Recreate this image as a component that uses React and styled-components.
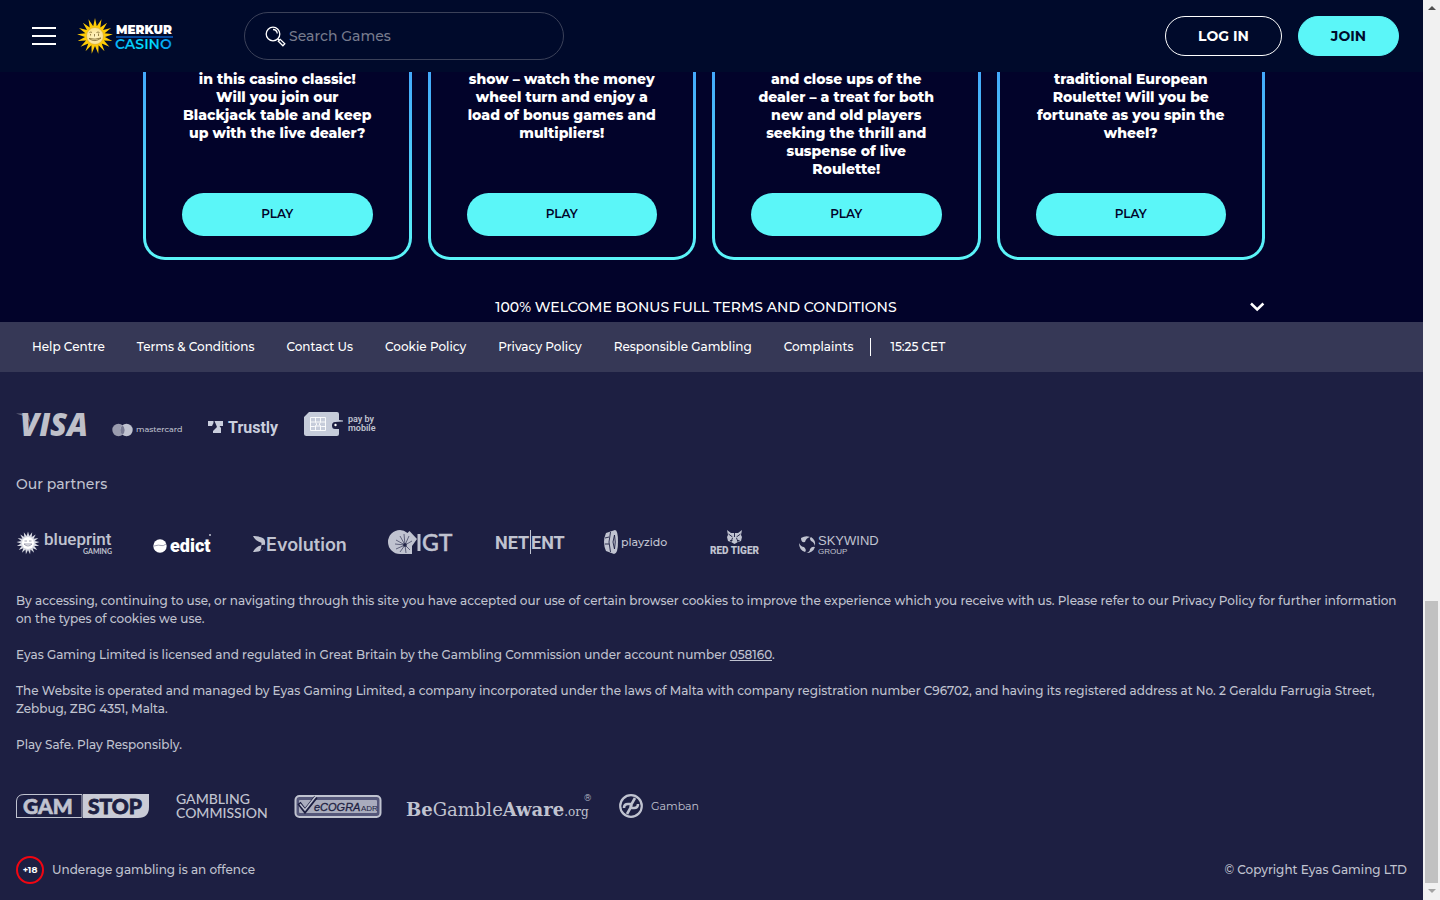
import React from 'react';
import styled, { createGlobalStyle } from 'styled-components';

const ink = '#c0c3d0';
const dark = '#1d1f42';

const Global = createGlobalStyle`
  *, *::before, *::after { box-sizing: border-box; }
  body { margin: 0; background: ${dark}; font-family: Montserrat, Inter, "Liberation Sans", sans-serif; color: #fff; }
  p { margin: 0; }
  button, input { font-family: inherit; }
  svg { display: block; overflow: visible; }
`;

const Shell = styled.div`display: grid; grid-template-columns: minmax(0, 1fr) 17px; min-height: 100vh;`;
const Page = styled.div`display: flex; flex-direction: column; background: ${dark};`;

const Header = styled.header`
  position: sticky; top: 0; z-index: 2; height: 72px; padding: 0 24px 0 32px;
  display: flex; align-items: center; background: #000a2b;
`;
const MenuButton = styled.button`
  width: 24px; height: 18px; padding: 0; border: 0; background: none; cursor: pointer;
  display: flex; flex-direction: column; justify-content: space-between;
  span { height: 2px; background: #fff; }
`;
const Brand = styled.a`margin-left: 21px; width: 98px;`;
const Search = styled.label`
  margin-left: 69px; width: 320px; height: 48px; padding: 0 20px; border: 1px solid #3b4159; border-radius: 24px;
  display: flex; align-items: center; gap: 3px;
  input { flex: 1; min-width: 0; padding: 0; border: 0; outline: 0; background: none; color: #fff; font-size: 14px; font-weight: 500; }
  input::placeholder { color: #777b8d; opacity: 1; }
`;
const Account = styled.div`margin-left: auto; display: flex; gap: 16px;`;
const Pill = styled.button`
  height: 40px; width: ${p => (p.$filled ? 101 : 117)}px; border-radius: 20px; cursor: pointer; padding: 0;
  border: 1px solid ${p => (p.$filled ? '#5bf6f8' : '#fff')};
  background: ${p => (p.$filled ? '#5bf6f8' : 'transparent')};
  color: ${p => (p.$filled ? '#000a2b' : '#fff')};
  font-size: 14px; font-weight: 700;
`;

const Main = styled.main`background: #02032a; padding-right: 15px; margin-top: -2px;`;
const Content = styled.div`max-width: 1122px; margin: 0 auto;`;
const Cards = styled.div`display: grid; grid-template-columns: repeat(4, minmax(0, 1fr)); gap: 16px;`;
const Card = styled.article`
  height: 190px; padding: 0 36px 21px; text-align: center;
  border: 3px solid transparent; border-top: 0; border-radius: 0 0 22px 22px;
  background: linear-gradient(#02032a, #02032a) padding-box, linear-gradient(#43a8fb, #5bf6f8) border-box;
  display: flex; flex-direction: column; justify-content: space-between;
  font-size: 14px; line-height: 18px; font-weight: 800;
  p { white-space: pre-line; margin: 0 -20px; }
`;
const Play = styled.button`
  height: 43px; border: 0; border-radius: 22px; background: #5bf6f8; color: #02032a;
  font-size: 12px; font-weight: 600; cursor: pointer; padding: 0 0 2px;
`;
const Terms = styled.button`
  width: 100%; height: 30px; margin-top: 32px; padding: 0; border: 0; background: none; color: #fff; cursor: pointer;
  display: flex; align-items: center; font-size: 14px; font-weight: 500;
  span { flex: 1; }
`;

const FooterNav = styled.nav`
  height: 50px; padding: 0 32px; background: #363856; display: flex; align-items: center; gap: 32px;
  font-size: 12px; line-height: 18px; font-weight: 500;
  a { color: #fff; text-decoration: none; }
`;
const Clock = styled.span`margin-left: -16px; padding-left: 20px; border-left: 1px solid #fff;`;
const Footer = styled.footer`flex: 1; padding: 40px 16px 16px; color: ${ink}; background: ${dark};`;
const LogoRow = styled.div`display: flex; gap: ${p => p.$gap}px; align-items: flex-start; height: 26px;`;
const Heading = styled.h2`margin: 36px 0; font-size: 14px; line-height: 20px; font-weight: 500;`;
const Legal = styled.div`
  margin: 36px 0 40px; display: grid; gap: 18px; font-size: 12px; line-height: 18px; font-weight: 500;
  a { color: inherit; }
`;
const Bottom = styled.div`
  margin-top: 36px; height: 28px; display: flex; align-items: center; gap: 8px;
  font-size: 12px; line-height: 18px; font-weight: 500;
`;
const Age = styled.span`
  width: 28px; height: 28px; border: 2px solid #f00612; border-radius: 50%; display: grid; place-items: center;
  color: #fff; font-size: 9px; font-weight: 700;
`;
const Copyright = styled.span`margin-left: auto;`;

const Scrollbar = styled.div`
  position: sticky; top: 0; height: 100vh; background: #f1f1f1; display: flex; flex-direction: column; align-items: center;
  padding: 6px 2px 7px;
`;
const Thumb = styled.div`margin-top: auto; margin-bottom: 6px; width: 13px; height: 31.3vh; background: #c1c1c1;`;
const Arrow = styled.span`
  border: 4px solid transparent; border-top-width: 0; border-bottom: 4px solid ${p => (p.$down ? '#a3a3a3' : '#505050')};
  transform: ${p => (p.$down ? 'rotate(180deg)' : 'none')};
`;

function rays(cx, cy, outer, inner, n) {
  return Array.from({ length: n * 2 }, (_, i) => {
    const r = i % 2 ? inner : outer;
    const a = (Math.PI * i) / n - Math.PI / 2;
    return `${(cx + r * Math.cos(a)).toFixed(1)},${(cy + r * Math.sin(a)).toFixed(1)}`;
  }).join(' ');
}

const T = ({ size, weight = 400, family = 'Montserrat, Inter, sans-serif', fill = ink, ...rest }) => (
  <text fontSize={size} fontWeight={weight} fontFamily={family} fill={fill} {...rest} />
);

const MerkurLogo = () => (
  <svg width="98" height="36" viewBox="0 0 98 36" aria-label="Merkur Casino">
    <defs>
      <linearGradient id="casino" x1="0" x2="1"><stop offset="0" stopColor="#08b4f5" /><stop offset=".6" stopColor="#00e4ff" /><stop offset="1" stopColor="#0690ee" /></linearGradient>
      <radialGradient id="face"><stop offset="0" stopColor="#fff4c4" /><stop offset="1" stopColor="#f8e08e" /></radialGradient>
    </defs>
    <polygon points={rays(18, 18, 18, 10, 17)} fill="#fecb06" />
    <circle cx="18" cy="18" r="8.5" fill="url(#face)" stroke="#d9a520" strokeWidth=".5" />
    <path d="M12.500 14.500q1.500-1 2.500 0M19.500 14.500q1.500-1 3 0M13.500 16v1.500M21.500 15.500v2.500M17.500 16v2.500M12 20.500q6 4.500 12-.5q-6 2-12 .5" fill="none" stroke="#7d6830" strokeWidth=".8" />
    <T x="39" y="16" size="12" weight="900" fill="#fff">MERKUR</T>
    <path d="M39 19h57" stroke="#0a5fc4" strokeWidth="1.500" />
    <T x="38" y="31" size="14" weight="600" fill="url(#casino)">CASINO</T>
  </svg>
);

const SearchIcon = () => (
  <svg width="21" height="21" viewBox="0 0 21 21" fill="none" stroke="#fff" strokeWidth="1.300">
    <circle cx="8" cy="8" r="6.800" />
    <path d="M8 3.500a4.500 4.500 0 0 1 4.300 4M12.800 12.800l1.400 1.400M13.300 15.200l1.900-1.900 4.600 4.500-1.900 2z" />
  </svg>
);
const Chevron = () => (
  <svg width="16" height="10" viewBox="0 0 16 10" fill="none" stroke="#fff" strokeWidth="2.500"><path d="M2 1.500l6.200 6 6.200-6" /></svg>
);

const Visa = () => (
  <svg width="72" height="26" viewBox="0 0 72 26" aria-label="Visa" fill="#bfc0c9">
    <path d="M0 1.500h9q3 0 4 3l2 8Q12 4 0 1.500z" opacity=".5" />
    <T x="4" y="24" size="31" weight="800" family='"Open Sans", sans-serif' fontStyle="italic" fill="#bfc0c9">VISA</T>
  </svg>
);
const Mastercard = () => (
  <svg width="72" height="26" viewBox="0 0 72 26" aria-label="Mastercard">
    <circle cx="6.500" cy="18" r="6.200" fill="#9a9cae" /><circle cx="14.500" cy="18" r="6.200" fill={ink} />
    <path d="M10.500 13.300a6.200 6.200 0 0 1 0 9.400a6.200 6.200 0 0 1 0-9.400" fill="#777991" />
    <T x="24" y="20" size="8" weight="500">mastercard</T>
  </svg>
);
const Trustly = () => (
  <svg width="72" height="26" viewBox="0 0 72 26" aria-label="Trustly" fill="#c9cedd">
    <path d="M0 9h5.500v2l-1.500 3H0zM6.500 9H15v5h-3.500L13 16v5H5v-2l4-4z" />
    <T x="20" y="21" size="16" weight="700" family="Roboto, sans-serif" fill="#c9cedd">Trustly</T>
  </svg>
);
const PayByMobile = () => (
  <svg width="72" height="26" viewBox="0 0 72 26" aria-label="Pay by mobile">
    <path d="M5 0h28a2 2 0 0 1 2 2v6l4 .5v1l-8 .5q-3 0-3 3.500t3 3.500h4v5a2 2 0 0 1-2 2H2.500A2.500 2.500 0 0 1 0 21.500V5z" fill="#c6ccda" />
    <circle cx="31.500" cy="13" r="1.200" fill="#fff" />
    <path d="M6.500 5.500h15v13h-15zM6.500 10h4l2 1.500v1.500L10.500 14.500h-4M21.500 10h-4l-2 1.500v1.500l2 1.500h4M11.500 5.500V10h5V5.500M11.500 18.500V14h5v4.500" fill="none" stroke="#fff" strokeWidth=".9" />
    <T x="44" y="10" size="9" weight="600" family="Roboto, sans-serif">pay by</T>
    <T x="44" y="19" size="9" weight="600" family="Roboto, sans-serif">mobile</T>
  </svg>
);
const Blueprint = () => (
  <svg width="96" height="26" viewBox="0 0 96 26" aria-label="Blueprint Gaming">
    <polygon points={rays(12, 13, 11.5, 7, 17)} fill="#d8dae3" />
    <circle cx="12" cy="13" r="6" fill="#fff" />
    <path d="M8.500 11h2.500M13 11h2.500M8 14q4 4 8 0z" fill="none" stroke="#8a8ca0" strokeWidth=".8" />
    <T x="28" y="15" size="17" weight="500" family="Roboto, sans-serif">blueprint</T>
    <T x="67" y="24" size="7" weight="700" family="Lato, sans-serif">GAMING</T>
  </svg>
);
const Edict = () => (
  <svg width="58" height="26" viewBox="0 0 58 26" aria-label="edict">
    <circle cx="7" cy="16" r="6.700" fill="#fff" /><path d="M1 16q5-1.500 7-.5t5-1.500" stroke="#8a8ca0" strokeWidth=".8" fill="none" />
    <T x="17" y="22" size="18" weight="900" family="Roboto, sans-serif" fill="#fff">edict</T>
    <circle cx="57" cy="5" r="1" fill={ink} />
  </svg>
);
const Evolution = () => (
  <svg width="95" height="26" viewBox="0 0 95 26" aria-label="Evolution" fill={ink}>
    <path d="M1 6q11-.5 12 7.500Q4 12.500 1 6zM1 22q11 .5 12-7.500Q4 15.500 1 22zM8 7q6 1 5 7t-5 7q3-7 0-14z" />
    <T x="14" y="21" size="18" weight="600" family="Inter, sans-serif">Evolution</T>
  </svg>
);
const Igt = () => (
  <svg width="66" height="26" viewBox="0 0 66 26" aria-label="IGT">
    <path d="M12 0Q16 0 19.500 3l2-2 7.500 8-5 7v8H12A12 12 0 0 1 12 0z" fill={ink} />
    <path d="M17 15L12 6M17 15L8 10M17 15L8 19M17 15l-5 7M17 15l1 8M17 15l5 5M17 15l7-4M17 15l4-9M17 15l-10-1M17 15l-1-11" stroke={dark} strokeWidth=".6" />
    <circle cx="17" cy="15" r="2" fill={dark} opacity=".7" />
    <path d="M31 4v17" stroke={ink} strokeWidth="3" />
    <T x="34" y="21" size="23" weight="500" family="Lato, sans-serif" stroke={ink} strokeWidth=".5">GT</T>
  </svg>
);
const NetEnt = () => (
  <svg width="68" height="26" viewBox="0 0 68 26" aria-label="NetEnt">
    <T x="0" y="19" size="18" weight="700" family="Roboto, sans-serif">NET</T>
    <T x="36" y="19" size="18" weight="700" family="Roboto, sans-serif">ENT</T>
    <path d="M35.500 0v24" stroke={ink} />
  </svg>
);
const Playzido = () => (
  <svg width="65" height="26" viewBox="0 0 65 26" aria-label="Playzido">
    <path d="M2 3l9-3q3 0 3 12t-4 12L2 21q-4-9 0-18z" fill={ink} />
    <path d="M6.500 2q-3 10 0 20M1 8l4-1M1 14h4M10.500 5q-3 7 0 14q1.500-7 0-14" fill="none" stroke={dark} strokeWidth=".9" />
    <T x="17" y="16" size="11" weight="500">playzido</T>
  </svg>
);
const RedTiger = () => (
  <svg width="48" height="26" viewBox="0 0 48 26" aria-label="Red Tiger">
    <path d="M17 0l4 3h7l4-3-1 5 1 2-1 4-3 1-3.500 2-3.500-2-3-1-1-4 1-2z" fill={ink} />
    <path d="M18.500 4l4 3M30.500 4l-4 3M24.500 3v4M20 10.500h2.500M27 10.500h2.500M22.500 8l-2 5M26.500 8l2 5" stroke={dark} strokeWidth=".9" fill="none" />
    <T x="0" y="24" size="10" weight="900" family="Roboto, sans-serif">RED TIGER</T>
  </svg>
);
const Skywind = () => (
  <svg width="80" height="26" viewBox="0 0 80 26" aria-label="Skywind Group">
    <path d="M2 8q5-3 9-1-4 1-5 5-4 1-4-4zM12 7q5 3 4 9-1-4-4-5-2-3 0-4zM16 17q-2 6-9 6 4-1 4-4 2-3 5-2zM6 22q-6-2-6-9 2 4 5 4 3 3 1 5z" fill={ink} />
    <T x="19" y="15" size="13" family='"Liberation Sans", sans-serif'>SKYWIND</T>
    <T x="19" y="24" size="8" family='"Liberation Sans", sans-serif'>GROUP</T>
  </svg>
);
const GamStop = () => (
  <svg width="135" height="26" viewBox="0 0 135 26" aria-label="Gamstop">
    <path d="M.5 24V7Q1 .5 8 .5h58V23.500H.5" fill="none" stroke={ink} />
    <path d="M67 0h66v13q0 11-11 11H67z" fill="#c9cbd6" />
    <T x="7" y="20" size="21" weight="900" family="Lato, sans-serif" stroke={ink} strokeWidth=".6">GAM</T>
    <T x="72" y="20" size="21" weight="900" family="Lato, sans-serif" fill={dark} stroke={dark} strokeWidth=".8">STOP</T>
  </svg>
);
const Commission = () => (
  <svg width="93" height="26" viewBox="0 0 93 26" aria-label="Gambling Commission">
    <T x="0" y="10" size="14" weight="500" family="Lato, sans-serif">GAMBLING</T>
    <T x="0" y="24" size="14" weight="500" family="Lato, sans-serif">COMMISSION</T>
  </svg>
);
const Ecogra = () => (
  <svg width="87" height="26" viewBox="0 0 87 26" aria-label="eCOGRA ADR">
    <rect x="1.500" y="2" width="85" height="21" rx="4" fill="#55577a" stroke={ink} strokeWidth="2" />
    <rect x="5" y="6" width="78" height="13" rx="1" fill="#a9acbd" />
    <path d="M5 9l6 8L22 3" fill="none" stroke={dark} strokeWidth="4" /><path d="M6 10l5 6L22 2" fill="none" stroke={ink} strokeWidth="1.500" />
    <T x="20" y="17" size="11" weight="400" family='"Liberation Sans", sans-serif' fontStyle="italic" fill={dark} stroke={dark} strokeWidth=".3">eCOGRA</T>
    <T x="67" y="17" size="8" family='"Liberation Sans", sans-serif' fill={dark}>ADR</T>
  </svg>
);
const GambleAware = () => (
  <svg width="188" height="26" viewBox="0 0 188 26" aria-label="BeGambleAware.org">
    <T x="0" y="22" size="18" family='"DejaVu Serif", serif'>
      <tspan fontWeight="700">Be</tspan>Gamble<tspan fontWeight="700">Aware</tspan><tspan fontSize="12">.org</tspan>
    </T>
    <T x="178" y="7" size="9">®</T>
  </svg>
);
const Gamban = () => (
  <svg width="82" height="26" viewBox="0 0 82 26" aria-label="Gamban">
    <circle cx="12" cy="12" r="10.800" fill="none" stroke={ink} strokeWidth="2.200" />
    <path d="M5 14q0-4 4-4h3q1 1 0 3l-4 7M19 10q0 4-4 4h-3q-1-1 0-3l4-7" fill="none" stroke={ink} strokeWidth="2.600" />
    <T x="32" y="16" size="11">Gamban</T>
  </svg>
);

const cards = [
  'in this casino classic!\nWill you join our\nBlackjack table and keep\nup with the live dealer?',
  'show – watch the money\nwheel turn and enjoy a\nload of bonus games and\nmultipliers!',
  'and close ups of the\ndealer – a treat for both\nnew and old players\nseeking the thrill and\nsuspense of live\nRoulette!',
  'traditional European\nRoulette! Will you be\nfortunate as you spin the\nwheel?',
];
const links = ['Help Centre', 'Terms & Conditions', 'Contact Us', 'Cookie Policy', 'Privacy Policy', 'Responsible Gambling', 'Complaints'];

export default function App() {
  return (
    <Shell>
      <Global />
      <Page>
        <Header>
          <MenuButton aria-label="Menu"><span /><span /><span /></MenuButton>
          <Brand href="#"><MerkurLogo /></Brand>
          <Search><SearchIcon /><input type="search" aria-label="Search Games" placeholder="Search Games" /></Search>
          <Account><Pill>LOG IN</Pill><Pill $filled>JOIN</Pill></Account>
        </Header>
        <Main>
          <Content>
            <Cards>{cards.map(text => <Card key={text}><p>{text}</p><Play>PLAY</Play></Card>)}</Cards>
            <Terms><span>100% WELCOME BONUS FULL TERMS AND CONDITIONS</span><Chevron /></Terms>
          </Content>
        </Main>
        <FooterNav>
          {links.map(l => <a href="#" key={l}>{l}</a>)}
          <Clock>15:25 CET</Clock>
        </FooterNav>
        <Footer>
          <LogoRow $gap={24}><Visa /><Mastercard /><Trustly /><PayByMobile /></LogoRow>
          <Heading>Our partners</Heading>
          <LogoRow $gap={41}><Blueprint /><Edict /><Evolution /><Igt /><NetEnt /><Playzido /><RedTiger /><Skywind /></LogoRow>
          <Legal>
            <p>By accessing, continuing to use, or navigating through this site you have accepted our use of certain browser cookies to improve the experience which you receive with us. Please refer to our Privacy Policy for further information on the types of cookies we use.</p>
            <p>Eyas Gaming Limited is licensed and regulated in Great Britain by the Gambling Commission under account number <a href="#">058160</a>.</p>
            <p>The Website is operated and managed by Eyas Gaming Limited, a company incorporated under the laws of Malta with company registration number C96702, and having its registered address at No. 2 Geraldu Farrugia Street, Zebbug, ZBG 4351, Malta.</p>
            <p>Play Safe. Play Responsibly.</p>
          </Legal>
          <LogoRow $gap={25}><GamStop /><Commission /><Ecogra /><GambleAware /><Gamban /></LogoRow>
          <Bottom><Age>+18</Age><span>Underage gambling is an offence</span><Copyright>© Copyright Eyas Gaming LTD</Copyright></Bottom>
        </Footer>
      </Page>
      <Scrollbar aria-hidden="true"><Arrow /><Thumb /><Arrow $down /></Scrollbar>
    </Shell>
  );
}
